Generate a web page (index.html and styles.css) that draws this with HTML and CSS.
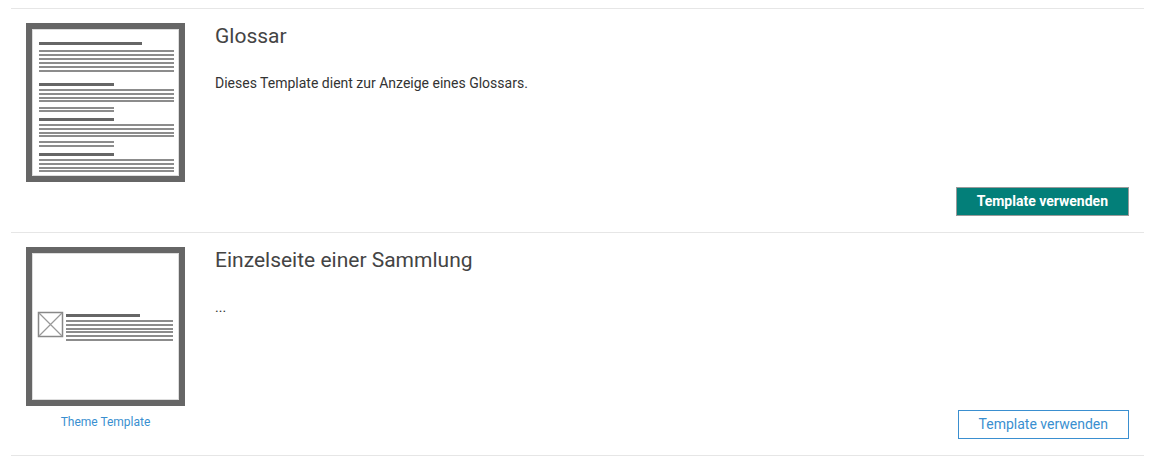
FILE: index.html
```html
<!DOCTYPE html>
<html lang="de">
<head>
<meta charset="utf-8">
<title>Templates</title>
<link rel="stylesheet" href="styles.css">
</head>
<body>
<div class="list">
  <div class="card">
    <div class="thumb-col">
      <div class="thumb">
        <svg width="147" height="147" viewBox="0 0 147 147">
          <g fill="#666">
            <rect x="7" y="13" width="103" height="3"/>
            <rect x="7" y="54" width="75" height="3"/>
            <rect x="7" y="89" width="75" height="3"/>
            <rect x="7" y="124" width="75" height="3"/>
          </g>
          <g fill="#8c8c8c">
            <rect x="7" y="21" width="135" height="2"/>
            <rect x="7" y="25" width="135" height="2"/>
            <rect x="7" y="29" width="135" height="2"/>
            <rect x="7" y="33" width="135" height="2"/>
            <rect x="7" y="37" width="135" height="2"/>
            <rect x="7" y="41" width="135" height="2"/>
            <rect x="7" y="60" width="135" height="2"/>
            <rect x="7" y="64" width="135" height="2"/>
            <rect x="7" y="68" width="135" height="2"/>
            <rect x="7" y="71" width="135" height="2"/>
            <rect x="7" y="78" width="75" height="2"/>
            <rect x="7" y="81" width="75" height="2"/>
            <rect x="7" y="95" width="135" height="2"/>
            <rect x="7" y="99" width="135" height="2"/>
            <rect x="7" y="103" width="135" height="2"/>
            <rect x="7" y="106" width="135" height="2"/>
            <rect x="7" y="112" width="75" height="2"/>
            <rect x="7" y="116" width="75" height="2"/>
            <rect x="7" y="130" width="135" height="2"/>
            <rect x="7" y="134" width="135" height="2"/>
            <rect x="7" y="138" width="135" height="2"/>
            <rect x="7" y="141" width="135" height="2"/>
          </g>
        </svg>
      </div>
    </div>
    <div class="body">
      <h3 class="title">Glossar</h3>
      <p class="desc">Dieses Template dient zur Anzeige eines Glossars.</p>
      <button class="btn btn-primary">Template verwenden</button>
    </div>
  </div>
  <div class="card card-last">
    <div class="thumb-col">
      <div class="thumb">
        <svg width="147" height="147" viewBox="0 0 147 147">
          <rect x="6.5" y="59.5" width="24" height="24" fill="none" stroke="#888" stroke-width="1.5"/>
          <path d="M7 60 L30 83 M30 60 L7 83" stroke="#999" stroke-width="1.2"/>
          <rect x="34" y="61" width="74" height="3" fill="#666"/>
          <g fill="#8c8c8c">
            <rect x="34" y="67" width="107" height="2"/>
            <rect x="34" y="71" width="107" height="2"/>
            <rect x="34" y="75" width="107" height="2"/>
            <rect x="34" y="78" width="107" height="2"/>
            <rect x="34" y="82" width="107" height="2"/>
            <rect x="34" y="86" width="107" height="2"/>
          </g>
        </svg>
      </div>
      <a class="theme-link" href="#">Theme Template</a>
    </div>
    <div class="body">
      <h3 class="title">Einzelseite einer Sammlung</h3>
      <p class="desc">...</p>
      <button class="btn btn-outline">Template verwenden</button>
    </div>
  </div>
</div>
</body>
</html>
```

FILE: styles.css
```css
html, body {
  margin: 0;
  padding: 0;
  background: #fff;
}

body {
  font-family: Roboto, "Liberation Sans", Arial, sans-serif;
  color: #333;
  padding: 8px 10px 0 11px;
}

.list {
  border-bottom: 1px solid #e6e6e6;
}

.card {
  display: flex;
  gap: 30px;
  border-top: 1px solid #e6e6e6;
  padding: 14px 15px 16px 15px;
}

.card-last .body {
  min-height: 192px;
}

.thumb-col {
  width: 159px;
  flex: none;
  display: flex;
  flex-direction: column;
  align-items: center;
}

.thumb {
  width: 147px;
  height: 147px;
  border: 6px solid #666;
  background: #fff;
  box-shadow: inset 0 0 0 1px #ddd;
}

.thumb svg {
  display: block;
}

.theme-link {
  margin-top: 8px;
  font-size: 12px;
  line-height: 17px;
  color: #3a8fd0;
  text-decoration: none;
}

.body {
  flex: 1;
  min-height: 193px;
  display: flex;
  flex-direction: column;
}

.title {
  margin: 2px 0 0 0;
  font-size: 21px;
  line-height: 23px;
  font-weight: 400;
  color: #444;
}

.desc {
  margin: 25px 0 0 0;
  font-size: 14px;
  line-height: 20px;
  color: #333;
}

.btn {
  margin-top: auto;
  align-self: flex-end;
  font-family: Roboto, "Liberation Sans", Arial, sans-serif;
  font-size: 14px;
  line-height: 17px;
  padding: 5px 20px;
  cursor: pointer;
  border-radius: 0;
}

.btn-primary {
  background: #037f79;
  color: #fff;
  font-weight: 700;
  border: 1px solid #9a9a9a;
}

.btn-outline {
  background: #fff;
  color: #3a8fd0;
  font-weight: 400;
  border: 1px solid #3a8fd0;
}
```
